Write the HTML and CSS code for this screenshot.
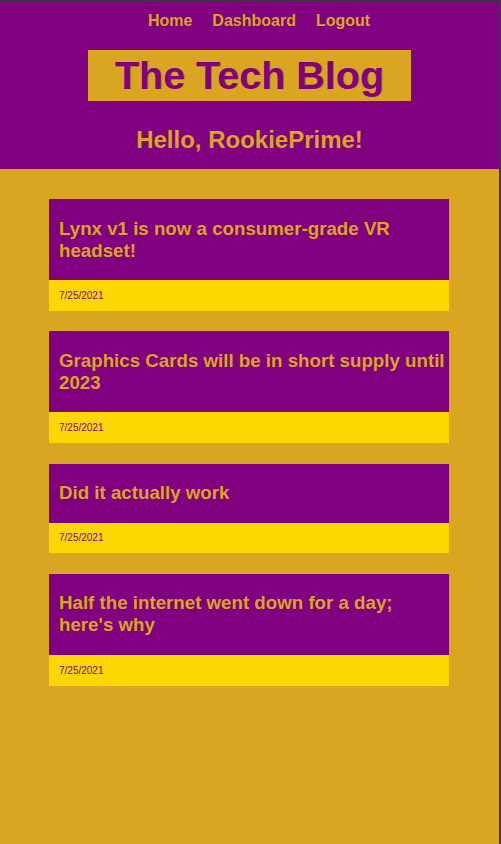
FILE: index.html
```html
<!DOCTYPE html>
<html lang="en">
<head>
<meta charset="utf-8">
<title>The Tech Blog</title>
<link rel="stylesheet" href="styles.css">
</head>
<body>
<div class="page">
  <header class="site-header">
    <nav class="nav">
      <a href="#" class="nav-link">Home</a>
      <a href="#" class="nav-link">Dashboard</a>
      <a href="#" class="nav-link">Logout</a>
    </nav>
    <h1 class="brand">The Tech Blog</h1>
    <h2 class="greeting">Hello, RookiePrime!</h2>
  </header>
  <main class="posts">
    <article class="post">
      <h3 class="post-title">Lynx v1 is now a consumer-grade VR headset!</h3>
      <p class="post-date">7/25/2021</p>
    </article>
    <article class="post">
      <h3 class="post-title">Graphics Cards will be in short supply until 2023</h3>
      <p class="post-date">7/25/2021</p>
    </article>
    <article class="post">
      <h3 class="post-title">Did it actually work</h3>
      <p class="post-date">7/25/2021</p>
    </article>
    <article class="post">
      <h3 class="post-title">Half the internet went down for a day; here's why</h3>
      <p class="post-date">7/25/2021</p>
    </article>
  </main>
</div>
</body>
</html>
```
FILE: styles.css
```css
html {
  background: #3a3a3a;
}
body {
  margin: 0;
  font-family: "Liberation Sans", Arial, sans-serif;
}
.page {
  width: 499px;
  min-height: 844px;
  background: #DAA520;
  box-sizing: border-box;
}
.site-header {
  background: #800080;
  border-top: 1px solid #3a3a3a;
  height: 169px;
  box-sizing: border-box;
  display: flex;
  flex-direction: column;
  align-items: center;
}
.nav {
  display: flex;
  justify-content: center;
  gap: 20px;
  padding-left: 19px;
  margin-top: 10.5px;
}
.nav-link {
  color: #DAA520;
  font-weight: bold;
  font-size: 16px;
  text-decoration: none;
  line-height: 18.4px;
}
.brand {
  margin: 20px 0 0;
  background: #DAA520;
  color: #800080;
  font-size: 39.5px;
  line-height: 46px;
  padding: 2.5px 27px;
  text-shadow: 1px 0 0 rgba(60, 50, 40, 0.3);
}
.greeting {
  margin: 24.8px 0 0;
  color: #DAA520;
  font-size: 24px;
  line-height: 27.6px;
}
.posts {
  display: flex;
  flex-direction: column;
  align-items: center;
  gap: 20.4px;
  padding: 30px 1px 30px 0;
}
.post {
  width: 400px;
}
.post-title {
  margin: 0;
  background: #800080;
  color: #DAA520;
  font-size: 18.72px;
  line-height: 22px;
  padding: 18.6px 0 18.6px 10px;
}
.post-date {
  margin: 0;
  background: #FFD700;
  color: #800080;
  font-size: 10px;
  line-height: 11.5px;
  padding: 9.6px 10px;
}
```
